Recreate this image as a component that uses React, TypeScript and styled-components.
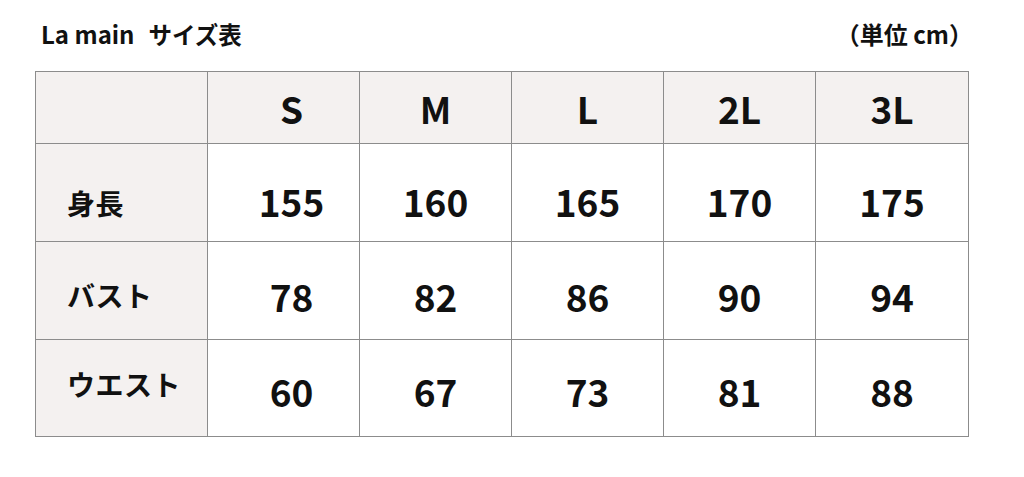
import React from "react";
import styled, { createGlobalStyle } from "styled-components";

const GlobalStyle = createGlobalStyle`
  html, body {
    margin: 0;
    padding: 0;
    background: #ffffff;
  }
  body {
    font-family: "Noto Sans CJK JP", "Noto Sans", sans-serif;
    color: #111111;
  }
`;

const Page = styled.div`
  width: 1024px;
  height: 477px;
  box-sizing: border-box;
  padding: 19px 56px 0 35px;
`;

const Header = styled.div`
  display: flex;
  justify-content: space-between;
  align-items: baseline;
  width: 934px;
  height: 30px;
  margin-bottom: 22px;
`;

const Title = styled.h1`
  display: flex;
  align-items: baseline;
  gap: 14px;
  margin: 0;
  padding-left: 6px;
  font-size: 24px;
  line-height: 30px;
  font-weight: 700;
  color: #111111;
`;

const TitleKana = styled.span`
  font-size: 23.5px;
`;

const Unit = styled.span`
  margin-right: -4px;
  font-size: 24px;
  line-height: 30px;
  font-weight: 700;
  color: #111111;
`;

const Table = styled.table`
  border-collapse: collapse;
  table-layout: fixed;
  width: 934px;
`;

const Col = styled.col<{ $w: number }>`
  width: ${(p) => p.$w}px;
`;

const HeadCell = styled.th<{ $shift?: number }>`
  height: 72px;
  padding: 0 0 0 ${(p) => p.$shift ?? 0}px;
  box-sizing: border-box;
  background: #f4f1f0;
  border: 1px solid #8c8c8c;
  font-size: 37px;
  font-weight: 700;
  text-align: center;
  vertical-align: middle;
  color: #111111;
`;

const LabelCell = styled.th<{ $h: number; $top: number; $bottom: number }>`
  height: ${(p) => p.$h}px;
  padding: ${(p) => p.$top}px 0 ${(p) => p.$bottom}px 31px;
  box-sizing: border-box;
  background: #f4f1f0;
  border: 1px solid #8c8c8c;
  font-size: 28px;
  font-weight: 700;
  text-align: left;
  vertical-align: middle;
  letter-spacing: 0.5px;
  color: #111111;
`;

const ValueCell = styled.td<{ $shift?: number; $dy: number }>`
  padding: ${(p) => p.$dy}px 0 0 ${(p) => p.$shift ?? 0}px;
  box-sizing: border-box;
  background: #ffffff;
  border: 1px solid #8c8c8c;
  font-size: 37px;
  font-weight: 700;
  text-align: center;
  vertical-align: middle;
  color: #111111;
`;

const sizes = ["S", "M", "L", "2L", "3L"];
const colWidths = [172, 152, 152, 152, 152, 153];

const rows = [
  { label: "身長", values: ["155", "160", "165", "170", "175"], h: 98, top: 20, bottom: 0, dyValue: 16 },
  { label: "バスト", values: ["78", "82", "86", "90", "94"], h: 98, top: 8, bottom: 0, dyValue: 10 },
  { label: "ウエスト", values: ["60", "67", "73", "81", "88"], h: 97, top: 0, bottom: 8, dyValue: 6 },
];

export default function App() {
  return (
    <>
      <GlobalStyle />
      <Page>
        <Header>
          <Title>
            <span>La main</span>
            <TitleKana>サイズ表</TitleKana>
          </Title>
          <Unit>（単位 cm）</Unit>
        </Header>
        <Table>
          <colgroup>
            {colWidths.map((w, i) => (
              <Col key={i} $w={w} />
            ))}
          </colgroup>
          <thead>
            <tr>
              <HeadCell />
              {sizes.map((s, i) => (
                <HeadCell key={s} $shift={i === 0 ? 16 : 0}>
                  {s}
                </HeadCell>
              ))}
            </tr>
          </thead>
          <tbody>
            {rows.map((r) => (
              <tr key={r.label}>
                <LabelCell $h={r.h} $top={r.top} $bottom={r.bottom}>
                  {r.label}
                </LabelCell>
                {r.values.map((v, i) => (
                  <ValueCell key={i} $shift={i === 0 ? 16 : 0} $dy={r.dyValue}>
                    {v}
                  </ValueCell>
                ))}
              </tr>
            ))}
          </tbody>
        </Table>
      </Page>
    </>
  );
}
